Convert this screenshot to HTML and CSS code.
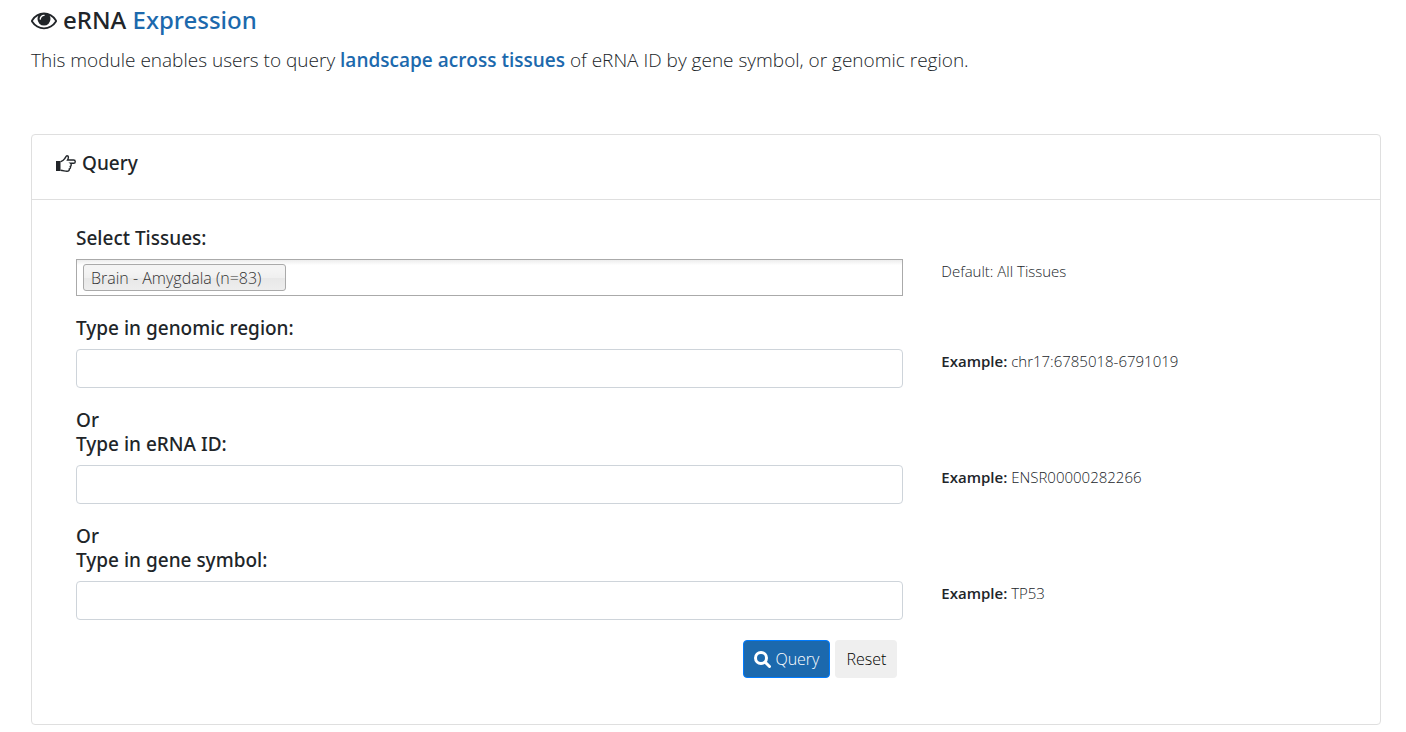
FILE: index.html
```html
<!DOCTYPE html>
<html lang="en">
<head>
    <meta charset="UTF-8">
    <meta name="viewport" content="width=device-width, initial-scale=1.0">
    <title>eRNA Expression</title>
    <link rel="stylesheet" href="styles.css">
</head>
<body>

<main class="page">
    <!-- Module title -->
    <h1 class="page-title">
        <svg class="icon-eye" viewBox="0 0 1792 1792" aria-hidden="true"><path d="M1664 960q-152-236-381-353 61 104 61 225 0 185-131.500 316.500t-316.500 131.500-316.500-131.500-131.500-316.500q0-121 61-225-229 117-381 353 133 205 333.500 326.500t434.500 121.500 434.500-121.500 333.500-326.500zm-720-384q0-20-14-34t-34-14q-125 0-214.500 89.500t-89.500 214.500q0 20 14 34t34 14 34-14 14-34q0-86 61-147t147-61q20 0 34-14t14-34zm848 384q0 34-20 69-140 230-376.500 368.500t-499.500 138.500-499.500-139-376.500-368q-20-35-20-69t20-69q140-229 376.500-368t499.500-139 499.500 139 376.500 368q20 35 20 69z"/></svg>
        <span>eRNA <span class="accent">Expression</span></span>
    </h1>
    <p class="intro">This module enables users to query <b class="accent">landscape across tissues</b> of eRNA ID by gene symbol, or genomic region.</p>

    <!-- Query card -->
    <section class="card">
        <h2 class="card-header">
            <svg class="icon-hand" viewBox="0 0 20 17" aria-hidden="true"><path class="cuff" d="M0 6h4.500v10H0z"/><path d="M4.500 6.700C7 6.500 8 4.500 9.300 2.800C10 1.800 10 .7 11 .7C12.900 .7 12.700 3 11.500 5H17.600C19.800 5 19.800 8.300 17.600 8.300H14.500C15.800 9.300 15.200 11 14.300 11.400C14.900 12.500 14.200 13.600 13.300 14C13.500 15.400 12.500 16.300 11 16.300C8.500 16.300 7.500 15.300 4.500 15.300"/></svg>
            Query
        </h2>
        <form class="card-body">
            <div class="form-row">
                <label for="tissues">Select Tissues:</label>
                <div class="tissue-select">
                    <span class="tissue-choice">Brain - Amygdala (n=83)</span>
                    <input type="text" id="tissues" class="tissue-search" autocomplete="off">
                </div>
                <p class="hint">Default: All Tissues</p>
            </div>

            <div class="form-row">
                <label for="region">Type in genomic region:</label>
                <input type="text" id="region" class="form-control">
                <p class="hint"><b>Example:</b> chr17:6785018-6791019</p>
            </div>

            <div class="form-row">
                <label for="erna">Or<br>Type in eRNA ID:</label>
                <input type="text" id="erna" class="form-control">
                <p class="hint"><b>Example:</b> ENSR00000282266</p>
            </div>

            <div class="form-row">
                <label for="gene">Or<br>Type in gene symbol:</label>
                <input type="text" id="gene" class="form-control">
                <p class="hint"><b>Example:</b> TP53</p>
            </div>

            <div class="buttons">
                <button type="button" class="btn btn-primary">
                    <svg class="icon-search" viewBox="0 0 17 17" aria-hidden="true"><circle cx="7" cy="7" r="5.500"/><path d="M11 11l4.500 4.500"/></svg>
                    Query
                </button>
                <button type="reset" class="btn btn-light">Reset</button>
            </div>
        </form>
    </section>
</main>

</body>
</html>
```

FILE: styles.css
```css
* {
    box-sizing: border-box;
}

body {
    margin: 0;
    background-color: #fff;
    color: #212529;
    font-family: "Open Sans", "Noto Sans", sans-serif;
    font-size: 15px;
    font-weight: 300;
    line-height: 24px;
}

.page {
    padding: 4px 25px 6px 31px;
}

.accent {
    color: #1c69ad;
}

/* Headings and labels */
.page-title,
.card-header,
.form-row label {
    font-family: "Noto Sans", "Open Sans", sans-serif;
    font-size: 19px;
    font-weight: 500;
}

/* Title */
.page-title {
    display: flex;
    align-items: center;
    gap: 6px;
    margin: 0 0 8px;
    font-size: 24px;
    line-height: 32px;
}

.icon-eye {
    width: 26px;
    height: 26px;
    fill: #212529;
}

.intro {
    margin: 0 0 58px;
    font-size: 19px;
    line-height: 32px;
}

b {
    font-weight: 600;
}

/* Card */
.card {
    border: 1px solid #dfdfdf;
    border-radius: 4px;
}

.card-header {
    display: flex;
    align-items: center;
    gap: 6px;
    margin: 0;
    padding: 16px 24px 24px;
    border-bottom: 1px solid #dfdfdf;
}

.icon-hand {
    width: 20px;
    height: 17px;
    fill: none;
    stroke: #212529;
    stroke-width: 1.4;
}

.icon-hand .cuff {
    fill: #212529;
    stroke: none;
}

.card-body {
    display: grid;
    grid-template-columns: 2fr 1fr;
    column-gap: 38px;
    padding: 26px 25px 46px 44px;
}

/* Form rows: label above the field, hint beside the field */
.form-row {
    display: grid;
    grid-column: 1 / -1;
    grid-template-columns: subgrid;
    row-gap: 9px;
    margin-bottom: 20px;
}

.form-row label {
    grid-column: 1 / -1;
}

.form-control {
    width: 100%;
    height: 39px;
    padding: 6px 12px;
    border: 1px solid #ced4da;
    border-radius: 4px;
    font: inherit;
    font-size: 16px;
}

.hint {
    margin: 0;
}

/* Tissue picker */
.tissue-select {
    display: flex;
    align-items: center;
    gap: 6px;
    height: 37px;
    padding: 0 6px;
    border: 1px solid #aaa;
    background-image: linear-gradient(#eee 1%, #fff 15%);
}

.tissue-choice {
    padding: 1px 24px 0 7px;
    border: 1px solid #aaa;
    border-radius: 3px;
    background-image: linear-gradient(#f4f4f4 20%, #f0f0f0 50%, #e8e8e8 52%, #eee 100%);
    color: #333;
    font-size: 16px;
}

.tissue-search {
    flex: 1;
    min-width: 0;
    border: 0;
    outline: 0;
    background: transparent;
    font: inherit;
}

/* Buttons */
.buttons {
    display: flex;
    justify-content: flex-end;
    gap: 5px;
    padding-right: 6px;
}

.btn {
    display: flex;
    align-items: center;
    gap: 4px;
    height: 38px;
    padding: 0 10px;
    border: 1px solid transparent;
    border-radius: 4px;
    font: inherit;
    font-size: 16px;
    cursor: pointer;
}

.btn-primary {
    border-color: #007bff;
    background-color: #1c69ad;
    color: #fff;
}

.btn-light {
    background-color: #efefef;
    color: #000;
}

.icon-search {
    width: 17px;
    height: 17px;
    fill: none;
    stroke: #fff;
    stroke-width: 3;
    stroke-linecap: round;
}
```
